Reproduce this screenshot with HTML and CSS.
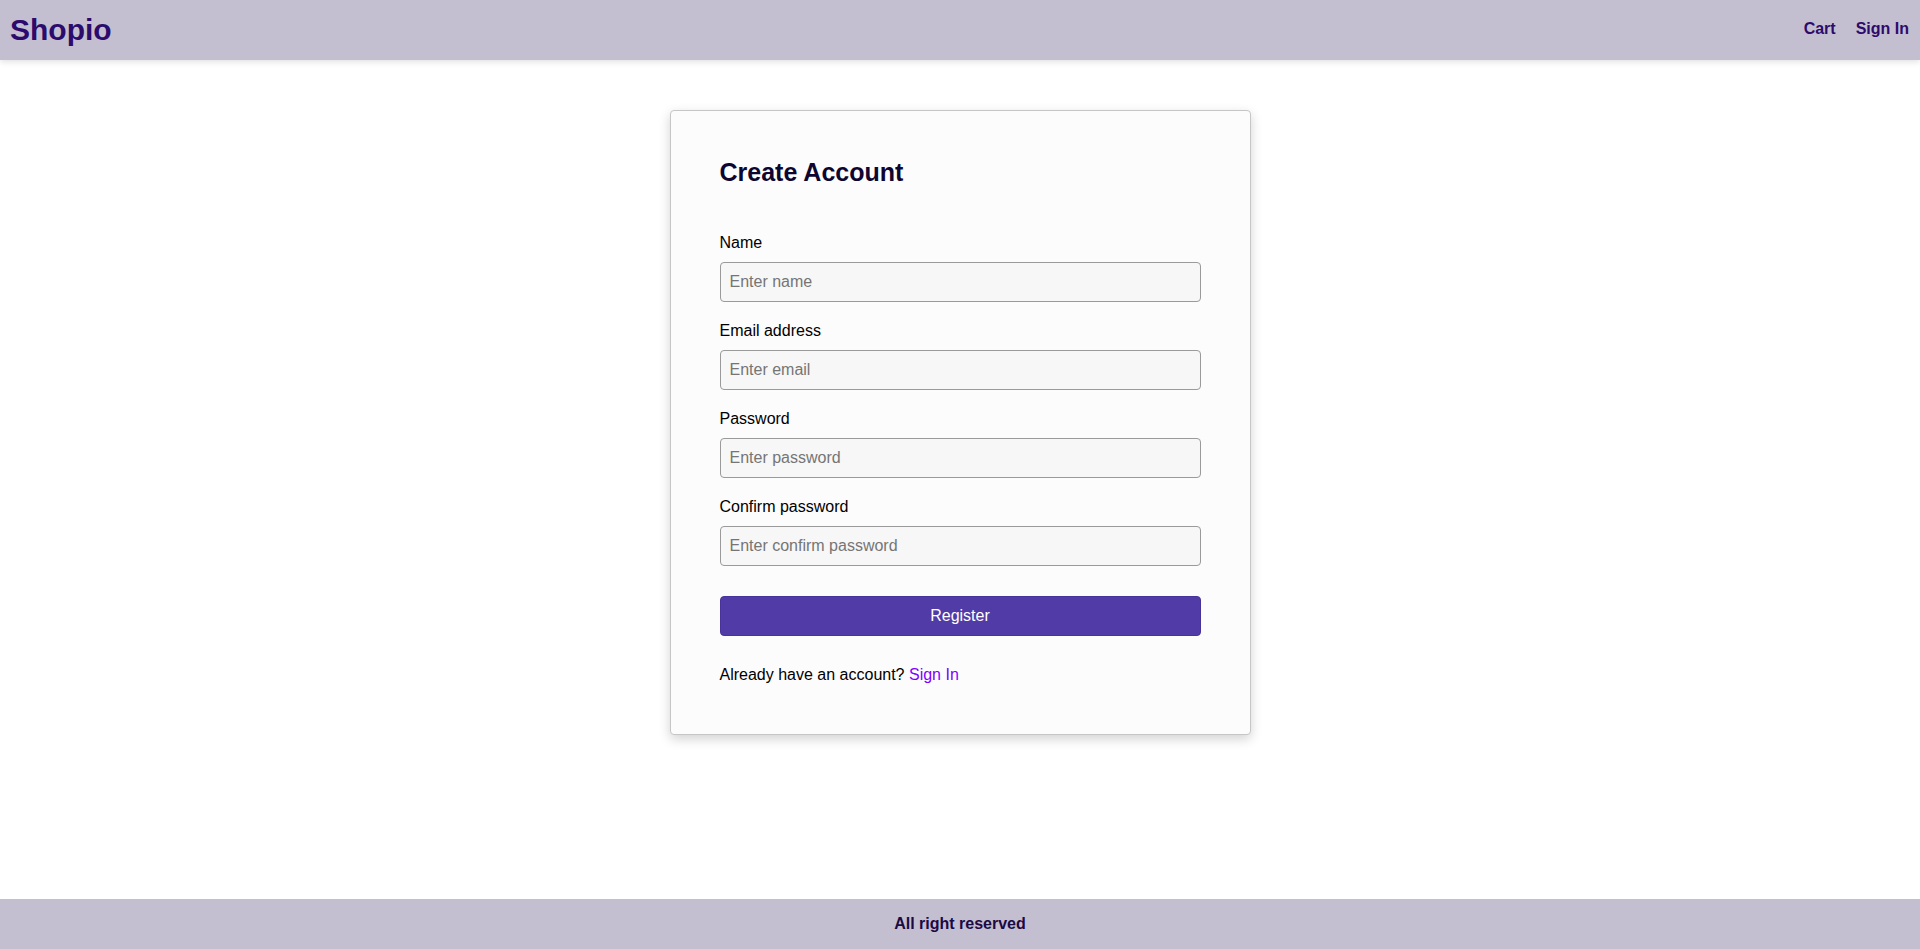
FILE: index.html
```html
<!DOCTYPE html>
<html lang="en">
<head>
<meta charset="utf-8">
<title>Shopio - Create Account</title>
<link rel="stylesheet" href="styles.css">
</head>
<body>
<header class="topbar">
  <a class="brand" href="#">Shopio</a>
  <nav class="nav">
    <a href="#">Cart</a>
    <a href="#">Sign In</a>
  </nav>
</header>
<main class="main">
  <div class="card">
    <h3 class="title">Create Account</h3>
    <form class="form">
      <label class="label" for="name">Name</label>
      <input class="input" id="name" type="text" placeholder="Enter name">
      <label class="label" for="email">Email address</label>
      <input class="input" id="email" type="email" placeholder="Enter email">
      <label class="label" for="pw">Password</label>
      <input class="input" id="pw" type="password" placeholder="Enter password">
      <label class="label" for="cpw">Confirm password</label>
      <input class="input" id="cpw" type="password" placeholder="Enter confirm password">
      <button class="btn" type="button">Register</button>
    </form>
    <p class="switch">Already have an account? <a href="#">Sign In</a></p>
  </div>
</main>
<footer class="footer">All right reserved</footer>
</body>
</html>
```

FILE: styles.css
```css
* { box-sizing: border-box; }
html, body { height: 100%; }
body {
  margin: 0;
  font-family: "Liberation Sans", Arial, sans-serif;
  font-size: 16px;
  color: #000;
  background: #fff;
  display: flex;
  flex-direction: column;
  min-height: 100vh;
}
.topbar {
  height: 60px;
  background: #c4bfd0;
  display: flex;
  align-items: center;
  justify-content: space-between;
  padding: 0 11px 0 10px;
  box-shadow: 0 2px 6px rgba(0, 0, 0, 0.12);
  position: relative;
  z-index: 1;
}
.brand {
  font-size: 30px;
  font-weight: bold;
  color: #2c0b6c;
  text-decoration: none;
}
.nav {
  display: flex;
  gap: 20px;
  margin-top: -2px;
}
.nav a {
  font-weight: bold;
  font-size: 16px;
  color: #2c0b6c;
  text-decoration: none;
}
.main {
  flex: 1;
  display: flex;
  justify-content: center;
  align-items: flex-start;
  padding-top: 50px;
}
.card {
  width: 581px;
  background: #fcfcfc;
  border: 1px solid #c6c6c6;
  border-radius: 4px;
  box-shadow: 0 4px 12px rgba(0, 0, 0, 0.18);
  padding: 47px 49px 47px;
}
.title {
  margin: 0 0 45px;
  font-size: 25px;
  line-height: 28px;
  font-weight: bold;
  color: #0e0631;
}
.form {
  display: flex;
  flex-direction: column;
}
.label {
  font-size: 16px;
  line-height: 24px;
  margin-bottom: 7px;
}
.input {
  height: 40px;
  margin-bottom: 17px;
  padding: 0 9px;
  font-family: inherit;
  font-size: 16px;
  background: #f7f7f7;
  border: 1px solid #9a9a9a;
  border-radius: 4px;
  color: #000;
}
.input::placeholder { color: #757575; }
.btn {
  margin-top: 13px;
  height: 40px;
  background: #513ba6;
  color: #fff;
  border: 1px solid #47339a;
  border-radius: 4px;
  font-family: inherit;
  font-size: 16px;
}
.switch {
  margin: 27px 0 0;
  line-height: 24px;
  font-size: 16px;
}
.switch a {
  color: #7f00ff;
  text-decoration: none;
}
.footer {
  height: 50px;
  background: #c4bfd0;
  display: flex;
  align-items: center;
  justify-content: center;
  font-weight: bold;
  color: #1a0a45;
  font-size: 16px;
}
```
